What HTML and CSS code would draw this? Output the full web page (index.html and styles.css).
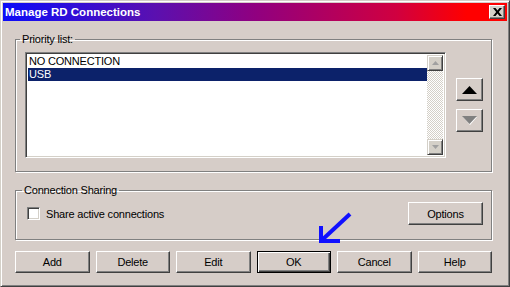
FILE: index.html
```html
<!DOCTYPE html>
<html>
<head>
<meta charset="utf-8">
<link rel="stylesheet" href="styles.css">
</head>
<body>
<div class="window">
  <div class="titlebar">
    <span class="title">Manage RD Connections</span>
    <span class="close"><svg width="9" height="8" viewBox="0 0 9 8"><path d="M0 0h2.5L4.5 2.5 6.5 0H9L5.8 4 9 8H6.5L4.5 5.5 2.5 8H0l3.2-4z" fill="#000"/></svg></span>
  </div>
  <div class="client">
    <fieldset class="group priority">
      <legend>Priority list:</legend>
      <div class="prio-row">
        <div class="listbox">
          <ul class="items">
            <li>NO CONNECTION</li>
            <li class="sel">USB</li>
          </ul>
          <div class="vscroll">
            <span class="sbtn"><svg width="7" height="4" viewBox="0 0 7 4"><path d="M3.5 0L7 4H0z" fill="#a0a0a0"/></svg></span>
            <span class="track"></span>
            <span class="sbtn"><svg width="7" height="4" viewBox="0 0 7 4"><path d="M0 0h7L3.5 4z" fill="#a0a0a0"/></svg></span>
          </div>
        </div>
        <div class="move-btns">
          <span class="mbtn"><svg width="15" height="8" viewBox="0 0 15 8"><path d="M7.5 0L15 8H0z" fill="#000"/></svg></span>
          <span class="mbtn"><svg width="16" height="9" viewBox="0 0 16 9"><path d="M1 1h14L8 9z" fill="#fff"/><path d="M0 0h15L7.5 8z" fill="#808080"/></svg></span>
        </div>
      </div>
    </fieldset>
    <fieldset class="group sharing">
      <legend>Connection Sharing</legend>
      <div class="share-row">
        <label class="check"><span class="box"></span>Share active connections</label>
        <span class="btn options">Options</span>
      </div>
    </fieldset>
    <div class="actions">
      <span class="btn">Add</span>
      <span class="btn">Delete</span>
      <span class="btn">Edit</span>
      <span class="btn default">OK</span>
      <span class="btn">Cancel</span>
      <span class="btn">Help</span>
    </div>
  </div>
  <svg class="annot" width="510" height="287" viewBox="0 0 510 287">
    <path d="M350 214L322 240" stroke="#1010ff" stroke-width="4" fill="none"/>
    <path d="M321 226V241H340" stroke="#1010ff" stroke-width="4" fill="none"/>
  </svg>
</div>
</body>
</html>
```
FILE: styles.css
```css
* { box-sizing: border-box; }
html, body { margin: 0; padding: 0; }
body {
  font-family: "Liberation Sans", Arial, sans-serif;
  font-size: 11px;
  letter-spacing: -0.2px;
  color: #000;
  background: #d6cdc8;
}
.window {
  position: relative;
  width: 510px;
  height: 287px;
  background: #d6cdc8;
  border: 1px solid;
  border-color: #d4d0c8 #404040 #404040 #d4d0c8;
  box-shadow: inset 1px 1px 0 #fff, inset -1px -1px 0 #808080;
  padding: 2px;
  display: flex;
  flex-direction: column;
}
.titlebar {
  height: 18px;
  background: linear-gradient(to right, #0c0cf8 0%, #5a10b0 30%, #900080 50%, #d00040 78%, #ff0000 92%, #ff0000 100%);
  display: flex;
  align-items: center;
  justify-content: space-between;
  padding: 0 2px 0 2px;
}
.title {
  color: #fff;
  font-weight: bold;
  font-size: 11.5px;
  font-family: "Liberation Sans", Arial, sans-serif;
  letter-spacing: 0;
  padding-left: 0;
}
.close {
  width: 16px;
  height: 14px;
  background: #d4d0c8;
  border: 1px solid;
  border-color: #fff #404040 #404040 #fff;
  box-shadow: inset -1px -1px 0 #808080;
  display: flex;
  align-items: center;
  justify-content: center;
}
.client {
  flex: 1;
  padding: 0 15px 0 12px;
  display: flex;
  flex-direction: column;
}
.group {
  margin: 0;
  border: 1px solid #808080;
  box-shadow: inset 1px 1px 0 #fff, 1px 1px 0 #fff;
  padding: 0;
  min-width: 0;
}
.group legend {
  padding: 0 2px;
  margin-left: -5px;
  line-height: 13px;
}
.priority {
  margin-top: 12px;
  height: 139px;
  padding: 6px 0 0 9px;
}
.prio-row {
  display: flex;
  align-items: flex-start;
}
.listbox {
  width: 421px;
  height: 106px;
  background: #fff;
  border: 1px solid;
  border-color: #808080 #fff #fff #808080;
  box-shadow: inset 1px 1px 0 #404040, inset -1px -1px 0 #d4d0c8;
  padding: 2px;
  display: flex;
}
.items {
  list-style: none;
  margin: 0;
  padding: 0;
  flex: 1;
}
.items li {
  height: 13px;
  line-height: 13px;
  padding-left: 1px;
}
.items li.sel {
  background: #0c226a;
  color: #fff;
}
.vscroll {
  width: 16px;
  display: flex;
  flex-direction: column;
}
.sbtn {
  width: 16px;
  height: 16px;
  background: #d4d0c8;
  border: 1px solid;
  border-color: #d4d0c8 #404040 #404040 #d4d0c8;
  box-shadow: inset 1px 1px 0 #fff, inset -1px -1px 0 #808080;
  display: flex;
  align-items: center;
  justify-content: center;
}
.track {
  flex: 1;
  background: repeating-conic-gradient(#fff 0 25%, #d4d0c8 0 50%) 0 0 / 2px 2px;
}
.move-btns {
  margin-left: 10px;
  margin-top: 26px;
  display: flex;
  flex-direction: column;
  gap: 8px;
}
.mbtn {
  width: 27px;
  height: 23px;
  background: #d6cdc8;
  border: 1px solid;
  border-color: #fff #404040 #404040 #fff;
  box-shadow: inset -1px -1px 0 #808080;
  display: flex;
  align-items: center;
  justify-content: center;
}
.sharing {
  margin-top: 12px;
  height: 56px;
  padding: 0 8px 0 11px;
}
.share-row {
  display: flex;
  align-items: center;
  justify-content: space-between;
  margin-top: 5px;
}
.check {
  display: flex;
  align-items: center;
  gap: 6px;
}
.box {
  width: 13px;
  height: 13px;
  background: #fff;
  border: 1px solid;
  border-color: #808080 #fff #fff #808080;
  box-shadow: inset 1px 1px 0 #404040, inset -1px -1px 0 #d4d0c8;
}
.btn {
  width: 75px;
  height: 22px;
  background: #d6cdc8;
  border: 1px solid;
  border-color: #fff #404040 #404040 #fff;
  box-shadow: inset -1px -1px 0 #808080;
  display: flex;
  align-items: center;
  justify-content: center;
}
.btn.options {
  height: 23px;
}
.btn.default {
  border: 1px solid #000;
  box-shadow: inset 1px 1px 0 #fff, inset -1px -1px 0 #404040, inset -2px -2px 0 #808080;
}
.actions {
  margin-top: 11px;
  display: flex;
  gap: 6px;
}
.annot {
  position: absolute;
  left: -1px;
  top: -1px;
  pointer-events: none;
}
```
